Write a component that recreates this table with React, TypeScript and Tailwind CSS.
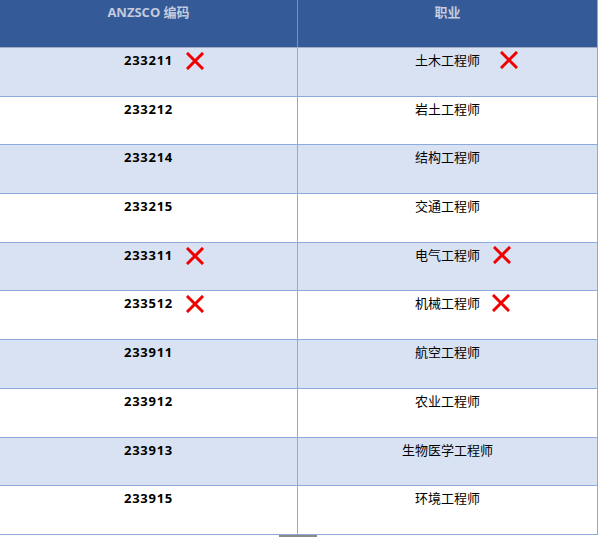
const rows: { code: string; job: string; codeX?: boolean; jobX?: string }[] = [
  { code: "233211", job: "土木工程师", codeX: true, jobX: "ml-[20px]" },
  { code: "233212", job: "岩土工程师" },
  { code: "233214", job: "结构工程师" },
  { code: "233215", job: "交通工程师" },
  { code: "233311", job: "电气工程师", codeX: true, jobX: "ml-[13px]" },
  { code: "233512", job: "机械工程师", codeX: true, jobX: "ml-[12px]" },
  { code: "233911", job: "航空工程师" },
  { code: "233912", job: "农业工程师" },
  { code: "233913", job: "生物医学工程师" },
  { code: "233915", job: "环境工程师" },
];

function Cross({ gap = "ml-[13px]" }: { gap?: string }) {
  return (
    <svg width="18" height="18" viewBox="0 0 18 18" className={`absolute top-[1px] left-full ${gap}`}>
      <path d="M2 2 L16 16 M16 2 L2 16" stroke="#f00000" strokeWidth="3" strokeLinecap="square" />
    </svg>
  );
}

export default function App() {
  return (
    <div className="w-[600px] h-[537px] bg-white text-black" style={{ fontFamily: '"Open Sans", "Noto Sans CJK SC", sans-serif' }}>
      <div className="w-[598px] border-r border-[#8eaadb]">
        <div className="flex h-[48px] bg-[#345a97] border-b border-[#a3adc2] text-[13px] font-bold text-[#c3cbdd]">
          <div className="w-[298px] border-r border-[#7d90b5] text-center pt-[3px]">ANZSCO 编码</div>
          <div className="flex-1 text-center pt-[3px]">职业</div>
        </div>
        {rows.map((r, i) => (
          <div
            key={r.code}
            className={`flex h-[48.7px] border-b border-[#8eaadb] text-[13px] ${i % 2 === 0 ? "bg-[#d9e2f3]" : "bg-white"}`}
          >
            <div className="w-[298px] border-r border-[#8eaadb] text-center pt-[3px]">
              <span className="relative inline-block font-bold tracking-[0.7px]">
                {r.code}
                {r.codeX && <Cross />}
              </span>
            </div>
            <div className="flex-1 text-center pt-[2px]">
              <span className="relative inline-block" style={{ fontFamily: '"Noto Sans CJK SC", sans-serif' }}>
                {r.job}
                {r.jobX && <Cross gap={r.jobX} />}
              </span>
            </div>
          </div>
        ))}
      </div>
      <div className="ml-[279px] w-[38px] h-[2px] bg-[#8a8a8a]" />
    </div>
  );
}
